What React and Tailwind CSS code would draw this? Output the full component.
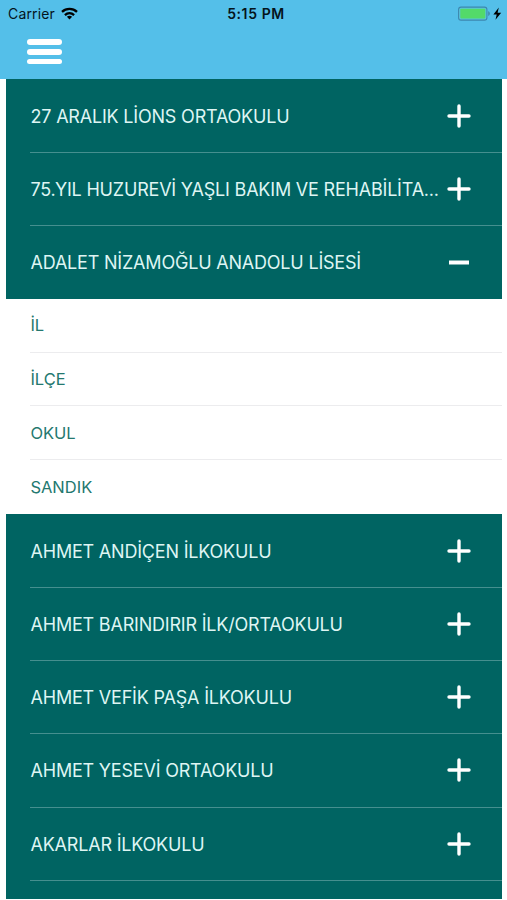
import React, { useState } from 'react';

const schools = [
  "27 ARALIK LİONS ORTAOKULU",
  "75.YIL HUZUREVİ YAŞLI BAKIM VE REHABİLİTA...",
  "ADALET NİZAMOĞLU ANADOLU LİSESİ",
  "AHMET ANDİÇEN İLKOKULU",
  "AHMET BARINDIRIR İLK/ORTAOKULU",
  "AHMET VEFİK PAŞA İLKOKULU",
  "AHMET YESEVİ ORTAOKULU",
  "AKARLAR İLKOKULU",
]
const details = ["İL", "İLÇE", "OKUL", "SANDIK"]

const StatusBar = () => {
  return (
    <div className="grid h-[27px] grid-cols-3 items-center pl-2 pr-[5px] text-[#04141c]">
      <div className="flex items-center gap-[6px]">
        <span className="text-[14px] leading-[27px] tracking-[0.15px]">Carrier</span>
        <svg className="h-[13px] w-[17px]" viewBox="0 0 17 13" fill="none" stroke="#000" strokeWidth="2.3">
          <path d="M1 4.9C5.2 0.9 11.8 0.9 16 4.9" />
          <path d="M3.9 8.1C6.6 5.6 10.4 5.6 13.1 8.1" />
          <path d="M5.9 9.8C7.4 8.5 9.6 8.5 11.1 9.8L8.5 12.6Z" fill="#000" stroke="none" />
        </svg>
      </div>
      <span className="pl-[2px] text-center text-[14px] font-semibold leading-[27px] tracking-[0.6px]">5:15 PM</span>
      <svg className="h-[16px] w-[44px] justify-self-end" viewBox="0 0 44 16">
        <rect x="0.6" y="1.1" width="28.3" height="13" rx="2.4" fill="#58c6dd" stroke="#3d87ae" strokeWidth="1.1" />
        <rect x="2.3" y="2.8" width="25" height="9.6" rx="0.8" fill="#53da69" />
        <path d="M30.3 5.3C32.2 5.9 32.2 9.3 30.3 9.9Z" fill="#3d7f9f" />
        <path d="M40.8 1.5L35.4 8.5H38.7L37.5 13.7L43.2 6.7H39.6Z" fill="#000" />
      </svg>
    </div>
  )
}

const ToggleIcon = ({ open }) => {
  return (
    <svg className="h-6 w-6 shrink-0" viewBox="0 0 24 24" fill="none" stroke="#fff">
      {open ? (
        <path d="M2 12.5H22" strokeWidth="4" />
      ) : (
        <path d="M2 12H22M12 2V22" strokeWidth="3.4" strokeLinecap="round" />
      )}
    </svg>
  )
}

const App = () => {
  const [openIndex, setOpenIndex] = useState(2);

  // close the row if it is already open
  const toggle = (index) => {
    setOpenIndex(openIndex === index ? null : index);
  }

  return (
    <div className="h-[900px] w-[507px] overflow-hidden bg-white font-['Inter','Liberation_Sans',sans-serif]">
      <header className="h-[79px] bg-[#54bfe9]">
        <StatusBar />
        <button type="button" aria-label="Menu" className="ml-[27px] mt-3 flex flex-col gap-[4px]">
          <span className="h-[5.8px] w-[35px] rounded-full bg-white" />
          <span className="h-[5.8px] w-[35px] rounded-full bg-white" />
          <span className="h-[5.8px] w-[35px] rounded-full bg-white" />
        </button>
      </header>
      <main className="ml-[6px] flex h-[819.5px] w-[496px] flex-col overflow-hidden bg-[#006462]">
        {
          schools.map((school, index) => (
            <section key={school} className="shrink-0">
              <div
                className="relative flex h-[73.25px] cursor-pointer items-center justify-between pl-[24.5px] pr-[31px]"
                onClick={() => toggle(index)}
              >
                <span className="whitespace-nowrap pt-[2.2px] text-[18px] leading-7 tracking-[-0.2px] text-[#def5f3]">{school}</span>
                <ToggleIcon open={openIndex === index} />
                {openIndex !== index && <div className="absolute -bottom-[0.75px] left-[24px] right-0 z-10 h-px bg-[#458f8f]" />}
              </div>
              {
                openIndex === index && <ul className="bg-white pl-[24px]">
                  {details.map((detail) => (
                    <li key={detail} className="flex h-[53.8px] items-center border-b border-[#ececee] pl-[0.4px] pt-[1.4px] text-[16.5px] text-[#24786f] last:border-0">{detail}</li>
                  ))}
                </ul>
              }
            </section>
          ))
        }
      </main>
    </div>
  )
}

export default App;
